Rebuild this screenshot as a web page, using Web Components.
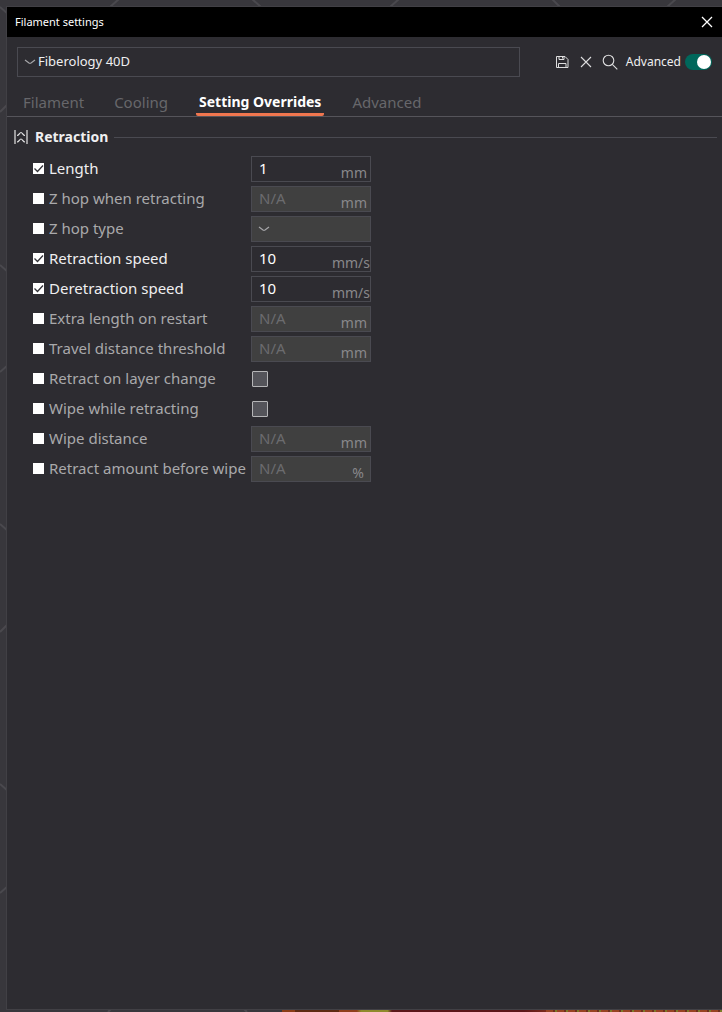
<!DOCTYPE html>
<html lang="en">
<head>
<meta charset="utf-8">
<title>Filament settings</title>
<style>
html{background:#38373c}
body{margin:0;font:15px/20px "Noto Sans","Open Sans",sans-serif;color:#efeff0}
</style>
</head>
<body>
<plate-backdrop>
  <settings-window heading="Filament settings">
    <preset-bar preset="Fiberology 40D"></preset-bar>
    <tab-strip tabs="Filament,Cooling,Setting Overrides,Advanced" active="2"></tab-strip>
    <option-group heading="Retraction">
      <override-row label="Length" value="1" unit="mm" on></override-row>
      <override-row label="Z hop when retracting" unit="mm"></override-row>
      <override-row label="Z hop type" kind="select"></override-row>
      <override-row label="Retraction speed" value="10" unit="mm/s" on></override-row>
      <override-row label="Deretraction speed" value="10" unit="mm/s" on></override-row>
      <override-row label="Extra length on restart" unit="mm"></override-row>
      <override-row label="Travel distance threshold" unit="mm"></override-row>
      <override-row label="Retract on layer change" kind="check"></override-row>
      <override-row label="Wipe while retracting" kind="check"></override-row>
      <override-row label="Wipe distance" unit="mm"></override-row>
      <override-row label="Retract amount before wipe" unit="%"></override-row>
    </option-group>
  </settings-window>
</plate-backdrop>
<script>
class Base extends HTMLElement {
  connectedCallback() {
    if (this.shadowRoot) return;
    this.attachShadow({ mode: 'open' }).innerHTML =
      '<style>*{box-sizing:border-box}button,input,select{font:inherit;color:inherit;margin:0}' + this.css() + '</style>' + this.html();
  }
  attr(n) { return this.getAttribute(n) || ''; }
}

customElements.define('plate-backdrop', class extends Base {
  css() { return `
    :host{display:flex;position:relative;box-sizing:border-box;min-height:100vh;padding:6px 0 2px 6px;overflow:hidden}
    svg{position:absolute;inset:0;width:100%;height:100%}
    .model{position:absolute;left:39%;right:0;bottom:0;height:3px;
      background:linear-gradient(90deg,#8a3c16 0 3%,#5d2a12 3% 13%,#8e3f1c 13% 17%,#8f8a2c 18% 24%,#5a1719 25% 55%,#7a2a1c 60%,#0000 60%),
      repeating-linear-gradient(90deg,#974322 0 7px,#6e2f1e 7px 9px,#7b7a28 9px 11px)}
    ::slotted(*){flex:1;min-width:0;position:relative}`; }
  html() { return `
    <svg aria-hidden="true" fill="none" stroke="#4a494e" stroke-width="2">
      <path d="M0 7l8 7M0 112l8-8M0 265l8 7M0 372l8-7M0 524l8 7M0 632l8-8M0 784l8 7M0 893l8-7M110 7l9-8M252-1l9 8M390 7l9-8M552-1l8 8M667 7l9-8M108 1012l4-4M243 1008l4 4"/>
    </svg><div class="model"></div><slot></slot>`; }
});

customElements.define('settings-window', class extends Base {
  css() { return `
    :host{display:flex;flex-direction:column;box-sizing:border-box;background:#2d2c31;border:solid #414045;border-width:1px 0 1px 1px}
    header{display:flex;align-items:center;justify-content:space-between;height:30px;padding:0 8px;background:#000;color:#fff}
    h1{margin:0;font-size:11px;line-height:16px;font-weight:400}
    button{display:flex;padding:1px;border:0;background:none}`; }
  html() { return `
    <header><h1>${this.attr('heading')}</h1>
      <button aria-label="Close"><svg width="12" height="12" fill="none" stroke="#fff" stroke-width="1.3"><path d="M1 1l10 10M11 1L1 11"/></svg></button>
    </header><slot></slot>`; }
});

const chevron = '<svg class="chev" width="12" height="6" aria-hidden="true" fill="none" stroke="#a5a5a8" stroke-width="1.2"><path d="M1 1l4 3q1 .6 2 0l4-3"/></svg>';

customElements.define('preset-bar', class extends Base {
  css() { return `
    :host{display:flex;align-items:center;padding:10px 10px 0;font-size:12px}
    .pick{display:grid;align-items:center;flex:1;margin-right:32px}
    .pick>*{grid-area:1/1}
    .chev{margin-left:7px;pointer-events:none}
    select{appearance:none;width:100%;height:30px;padding:0 0 2px 20px;border:1px solid #4a4a51;border-radius:0;background:none;font-size:13px}
    .tools{display:flex;align-items:center;gap:4px}
    button{display:grid;place-items:center;width:20px;height:20px;padding:0;border:0;background:none}
    label{display:flex;align-items:center;gap:4px;margin-left:2px}
    input{appearance:none;display:flex;align-items:center;justify-content:flex-end;width:27px;height:16px;padding:1px;border-radius:8px;background:#00675b}
    input::before{content:"";width:14px;height:14px;border-radius:50%;background:#fff}`; }
  html() { return `
    <div class="pick"><select aria-label="Preset"><option>${this.attr('preset')}</option></select>${chevron}</div>
    <div class="tools">
      <button aria-label="Save"><svg width="14" height="14" fill="none" stroke="#dededf"><path d="M1.500 1.500h8.500l3 3v8h-11.500zM4 1.500v3h5v-3M7.500 2v1.500M3.500 12.500v-4h7.500v4"/></svg></button>
      <button aria-label="Delete"><svg width="12" height="12" fill="none" stroke="#dededf" stroke-width="1.100"><path d="M1 1l10 10M11 1L1 11"/></svg></button>
      <button aria-label="Search"><svg width="16" height="16" fill="none" stroke="#dededf" stroke-width="1.100"><circle cx="6.500" cy="6.500" r="5.300"/><path d="M10.300 10.300l5 5"/></svg></button>
      <label>Advanced<input type="checkbox" role="switch" checked></label>
    </div>`; }
});

customElements.define('tab-strip', class extends Base {
  css() { return `
    :host{display:block}
    div{display:flex;gap:26px;height:40px;padding:0 14px;border-bottom:1px solid #55545a}
    button{padding:10px 2px 0;border:0;background:none;color:#67676b;white-space:nowrap}
    [aria-selected=true]{padding:10px 3px 0;color:#fff;font-size:14px;font-weight:700;background:linear-gradient(#f0764f,#f0764f) bottom/100% 3px no-repeat;border-radius:0 0 2px 2px}`; }
  html() { return '<div role="tablist">' + this.attr('tabs').split(',').map((t, i) =>
    `<button role="tab" aria-selected="${i === +this.attr('active')}">${t}</button>`).join('') + '</div>'; }
});

customElements.define('option-group', class extends Base {
  css() { return `
    :host{display:block;padding:10px 5px 10px 7px}
    header{display:flex;align-items:center;gap:7px;margin-bottom:9px}
    header::after{content:"";flex:1;height:1px;margin-left:-1px;background:#4a4a51}
    h2{margin:0;font-size:14px;line-height:20px;font-weight:700}
    .rows{display:grid;gap:4px;padding-left:19px}`; }
  html() { return `
    <header><svg width="14" height="16" aria-hidden="true" fill="none" stroke="#e4e4e5" stroke-width="1.200"><path d="M1 1v14M13 1v14M3 6.500c2 0 2.500-3 4-3s2 3 4 3M3 13c2 0 2.500-3 4-3s2 3 4 3"/></svg>
      <h2>${this.attr('heading')}</h2></header>
    <div class="rows"><slot></slot></div>`; }
});

customElements.define('override-row', class extends Base {
  css() { return `
    :host{display:grid;grid-template-columns:218px 120px;align-items:center;height:26px;color:#a9a9ab}
    :host([on]){color:#efeff0}
    label{display:flex;align-items:center;gap:5px;padding-bottom:2px;white-space:nowrap}
    label input{appearance:none;width:11px;height:11px;background:#fff}
    label input:checked{background:#fff url("data:image/svg+xml,%3Csvg xmlns='http://www.w3.org/2000/svg' width='11' height='11' fill='none' stroke='%23333338' stroke-width='1.300'%3E%3Cpath d='M1.500 5.500l3 3 5.500-6'/%3E%3C/svg%3E")}
    .field{display:grid;align-items:center;height:26px;border:1px solid #4a4a51;background:#404040}
    :host([on]) .field{background:none}
    .field>*{grid-area:1/1}
    .field input,.field select{appearance:none;width:100%;height:24px;padding:0 7px 2px;border:0;border-radius:0;background:none;color:#6b6b6e;opacity:1}
    :host([on]) .field input{color:#fff}
    .chev{margin-left:6px;pointer-events:none}
    .unit{align-self:end;justify-self:end;font-size:14px;line-height:16px;padding-right:3px;color:#88888b;pointer-events:none}
    .unit.wide{padding-right:0}
    .unit.sign{padding-right:6px}
    .box{appearance:none;width:16px;height:16px;margin-left:1px;border:1px solid #b5b5b7;border-radius:1px;background:#54545a}`; }
  html() {
    const on = this.hasAttribute('on'), label = this.attr('label'), unit = this.attr('unit'), kind = this.attr('kind');
    const cls = unit === '%' ? 'unit sign' : unit === 'mm/s' ? 'unit wide' : 'unit';
    const control = kind === 'check' ? `<input class="box" type="checkbox" disabled aria-label="${label} value">`
      : kind === 'select' ? `<div class="field"><select disabled aria-label="${label} value"></select>${chevron}</div>`
      : `<div class="field"><input value="${on ? this.attr('value') : 'N/A'}" ${on ? '' : 'disabled'} aria-label="${label} value"><span class="${cls}">${unit}</span></div>`;
    return `<label><input type="checkbox" ${on ? 'checked' : ''}>${label}</label>${control}`;
  }
});
</script>
</body>
</html>
